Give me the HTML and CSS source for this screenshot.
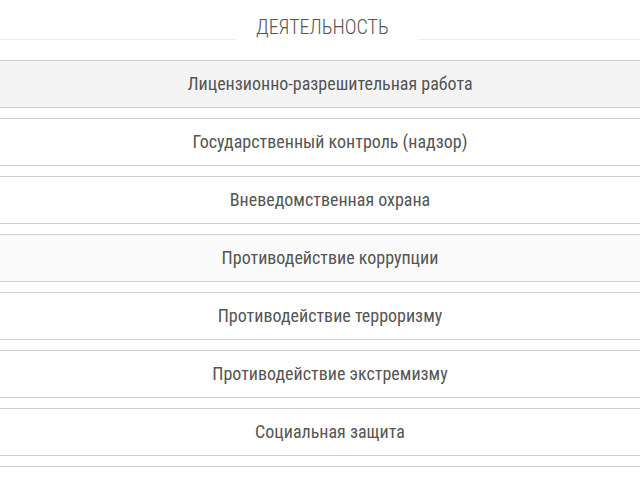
FILE: index.html
```html
<!DOCTYPE html>
<html lang="ru">
<head>
  <meta charset="UTF-8">
  <title>Деятельность</title>
  <meta name="viewport" content="width=device-width, initial-scale=1">
  <link rel="stylesheet" href="styles.css">
</head>
<body>
<div class="block">
  <div class="block-head">
    <span class="line"></span>
    <h2 class="block-title">ДЕЯТЕЛЬНОСТЬ</h2>
    <span class="line"></span>
  </div>
  <ul class="menu">
    <li class="item active"><a href="#">Лицензионно-разрешительная работа</a></li>
    <li class="item"><a href="#">Государственный контроль (надзор)</a></li>
    <li class="item"><a href="#">Вневедомственная охрана</a></li>
    <li class="item hover"><a href="#">Противодействие коррупции</a></li>
    <li class="item"><a href="#">Противодействие терроризму</a></li>
    <li class="item"><a href="#">Противодействие экстремизму</a></li>
    <li class="item"><a href="#">Социальная защита</a></li>
    <li class="item empty"></li>
  </ul>
</div>
</body>
</html>
```

FILE: styles.css
```css
body { margin:0; background:#fff; font-family:"Roboto Condensed", "Roboto", sans-serif; color:#444; }
.block-head { display:flex; align-items:flex-end; padding-top:15px; }
.line { flex:1; height:1px; background:#ededed; }
.block-title { margin:0; padding:0 29px 0 20px; font-size:20px; line-height:25px; font-weight:300; color:#555; }
.block-head .line:first-child { flex:0 0 236px; }
.menu { list-style:none; margin:20px 0 0; padding:0; }
.item { border-top:1px solid #cfcfcf; border-bottom:1px solid #cfcfcf; margin-bottom:10px; }
.item a { display:block; height:46px; line-height:46px; padding-left:20px; text-align:center; font-size:18px; color:#555; text-decoration:none; }
.item.empty { height:46px; }
.item.active { background:#f4f4f4; }
.item.hover { background:#fafafa; }
```
